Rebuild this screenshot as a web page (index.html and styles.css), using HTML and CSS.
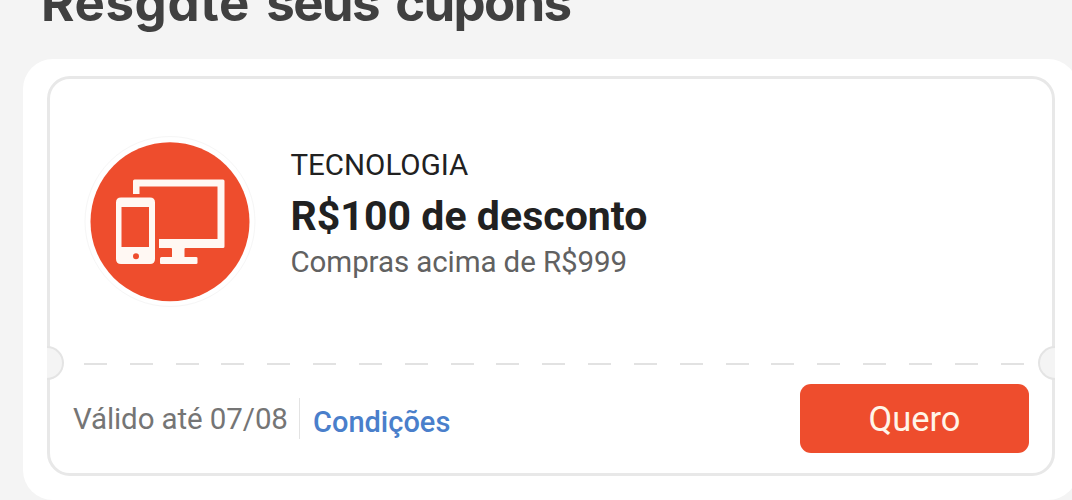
FILE: index.html
```html
<!DOCTYPE html>
<html lang="pt-BR">
<head>
<meta charset="utf-8">
<title>Cupons</title>
<link rel="stylesheet" href="styles.css">
</head>
<body>
<h1 class="heading"><span class="heading-lead">Resgate</span> seus cupons</h1>
<main class="panel">
  <article class="ticket">
    <section class="offer">
      <svg class="offer-icon" viewBox="0 0 180 180" aria-hidden="true">
        <circle cx="90" cy="91.500" r="85" fill="#fff" stroke="#f6f6f6" stroke-width="1"/>
        <circle cx="90" cy="91.700" r="79.500" fill="#ee4d2d"/>
        <g fill="#fff8f3">
          <path fill-rule="evenodd" d="M53 64V51q0-1.500 1.500-1.500H143q1.500 0 1.500 1.500v65.500q0 1.500-1.500 1.500h-37.500q-1 0-1 1v8h11.500q1.500 0 1.500 1v5q0 1-1.500 1h-35q-1 0-1-1v-4.500q0-1.500 1.500-1.500h10.500v-8q0-1-1-1H79V109h58.500V56.500H59.500V64z"/>
          <path fill-rule="evenodd" d="M41 67.500h29q5 0 5 5v56.500q0 5-5 5H41q-5 0-5-5V72.500q0-5 5-5zM41.500 77v40H69V77zM56 123.300a3 3 0 1 0 0 6 3 3 0 0 0 0-6z"/>
        </g>
      </svg>
      <div class="offer-text">
        <p class="category">TECNOLOGIA</p>
        <h2 class="discount">R$100 de desconto</h2>
        <p class="minimum">Compras acima de R$999</p>
      </div>
    </section>
    <div class="tear">
      <span class="notch notch-left"></span>
      <span class="dashes"></span>
      <span class="notch notch-right"></span>
    </div>
    <footer class="actions">
      <span class="validity">Válido até 07/08</span>
      <a class="conditions">Condições</a>
      <button class="claim">Quero</button>
    </footer>
  </article>
</main>
</body>
</html>
```
FILE: styles.css
```css
* { box-sizing: border-box; }
body {
  margin: 0;
  height: 500px;
  overflow: hidden;
  background: #f4f4f4;
  font-family: Roboto, sans-serif;
}
.heading {
  margin: -29px 0 0 41px;
  height: 88px;
  font: 700 51px/64px Inter, sans-serif;
  font-feature-settings: "cv11";
  letter-spacing: -1.700px;
  word-spacing: 6px;
  color: #404040;
  white-space: nowrap;
}
.heading-lead { letter-spacing: 0.600px; }
.panel {
  width: 1055px;
  height: 441px;
  margin-left: 23px;
  padding: 17px 23px 24px 24px;
  border-radius: 30px;
  background: #fff;
}
.ticket {
  display: flex;
  flex-direction: column;
  height: 400px;
  border: 3px solid #e8e8e8;
  border-radius: 23px;
}
.offer {
  display: flex;
  height: 267px;
  padding: 51px 0 0 30px;
}
.offer-icon { width: 180px; height: 180px; flex: none; }
.offer-text { margin: 15px 0 0 30.500px; white-space: nowrap; }
.category, .discount, .minimum { margin: 0; }
.category { font-size: 29.500px; line-height: 40px; color: #212121; }
.discount { font-size: 41px; line-height: 56px; margin-top: 3px; font-weight: 700; letter-spacing: 0.04px; color: #212121; }
.minimum { margin-top: -2px; font-size: 29.500px; line-height: 40px; letter-spacing: -0.09px; color: #616161; }
.tear {
  display: flex;
  align-items: center;
  height: 34px;
  margin: 0 -3px;
}
.notch {
  flex: none;
  width: 17px;
  height: 34px;
  border: 2px solid #e4e4e4;
  background: #f4f4f4;
}
.notch-left { border-left: 0; border-radius: 0 17px 17px 0; }
.notch-right { border-right: 0; border-radius: 17px 0 0 17px; }
.dashes {
  flex: 1;
  height: 2px;
  margin: 2px 14px 0 20px;
  background: repeating-linear-gradient(90deg, #e2e2e2 0 23px, transparent 23px 45.83px);
}
.actions {
  display: flex;
  align-items: flex-start;
  padding: 4px 23px 0 23px;
  white-space: nowrap;
}
.validity {
  height: 41px;
  width: 227px;
  margin-top: 14px;
  border-right: 1px solid #e3e3e3;
  font-size: 29.500px;
  line-height: 42px;
  letter-spacing: -0.1px;
  color: #757575;
}
.conditions {
  margin: 18px auto 0 13px;
  font-size: 29px;
  line-height: 40px;
  font-weight: 500;
  color: #4a7fcb;
}
.claim {
  width: 229px;
  height: 69px;
  padding: 0;
  border: 0;
  border-radius: 11px;
  background: #ee4d2d;
  color: #fff5e9;
  font: 400 34.500px/70px Roboto, sans-serif;
}
```
